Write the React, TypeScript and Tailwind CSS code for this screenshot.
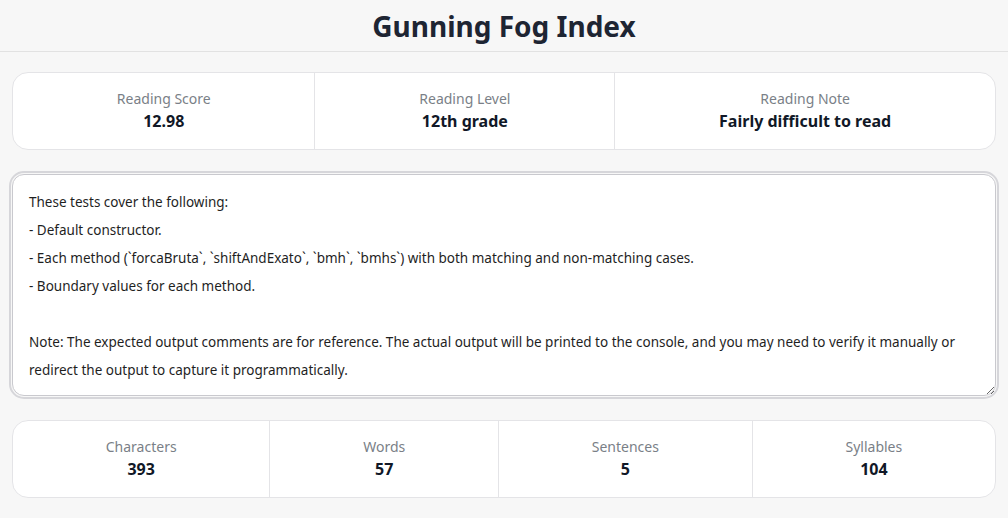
import { useEffect, useRef } from 'react';

const summary = [
    { label: 'Reading Score', value: '12.98' },
    { label: 'Reading Level', value: '12th grade' },
    { label: 'Reading Note', value: 'Fairly difficult to read' },
];

const counts = [
    { label: 'Characters', value: '393' },
    { label: 'Words', value: '57' },
    { label: 'Sentences', value: '5' },
    { label: 'Syllables', value: '104' },
];

const sampleText = `These tests cover the following:
- Default constructor.
- Each method (\`forcaBruta\`, \`shiftAndExato\`, \`bmh\`, \`bmhs\`) with both matching and non-matching cases.
- Boundary values for each method.

Note: The expected output comments are for reference. The actual output will be printed to the console, and you may need to verify it manually or redirect the output to capture it programmatically.`;

function StatCard({ items }: { items: { label: string; value: string }[] }) {
    return (
        <div className="flex h-[78px] rounded-2xl border border-[#e4e4e7] bg-white">
            {items.map((item, i) => (
                <div
                    key={item.label}
                    className={`flex flex-auto flex-col items-center justify-center ${i > 0 ? 'border-l border-[#e4e4e7]' : ''}`}
                >
                    <span className="text-sm leading-5 text-[#7a7f87]">{item.label}</span>
                    <span className="text-base leading-6 font-bold text-[#111827]">{item.value}</span>
                </div>
            ))}
        </div>
    );
}

export default function App() {
    const ref = useRef<HTMLTextAreaElement>(null);

    useEffect(() => {
        const el = ref.current;
        if (el) {
            el.focus();
            el.setSelectionRange(el.value.length, el.value.length);
        }
    }, []);

    return (
        <div className="min-h-[518px] bg-[#f7f7f7] font-['Noto_Sans',sans-serif]">
            <header className="flex h-[52px] items-center justify-center border-b border-[#e2e2e2]">
                <h1 className="text-[28px] font-bold leading-9 text-[#1e2533]">Gunning Fog Index</h1>
            </header>
            <main className="flex flex-col gap-6 px-3 pt-5 pb-5">
                <StatCard items={summary} />
                <textarea
                    ref={ref}
                    spellCheck={false}
                    defaultValue={sampleText}
                    className="h-[222px] w-full resize-y rounded-xl border border-[#c9c9ce] bg-white px-4 pt-[13px] font-['Noto_Sans',sans-serif] text-[13.5px] leading-7 text-[#1f1f1f] outline-2 outline-offset-1 outline-[#d6d6da] focus:outline-2 focus:outline-offset-1 focus:outline-[#d6d6da]"
                />
                <StatCard items={counts} />
            </main>
        </div>
    );
}
